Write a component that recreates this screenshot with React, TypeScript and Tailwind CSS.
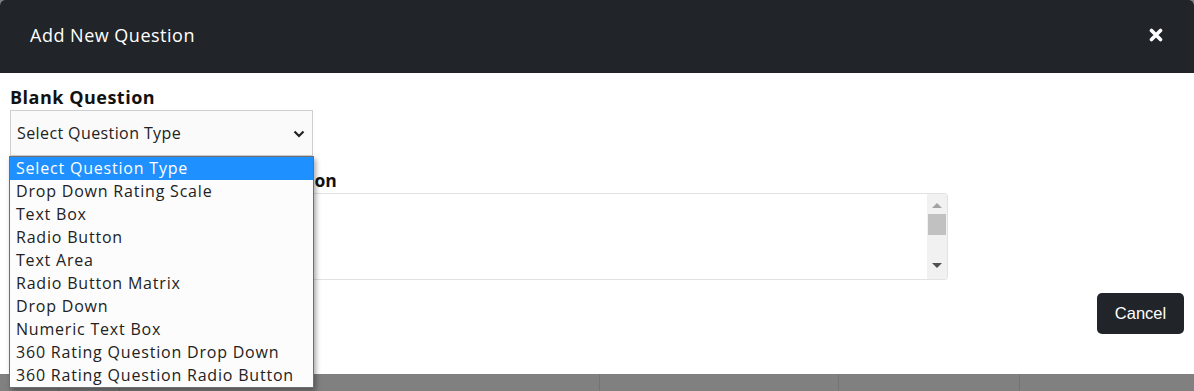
const questionTypes = [
  "Select Question Type",
  "Drop Down Rating Scale",
  "Text Box",
  "Radio Button",
  "Text Area",
  "Radio Button Matrix",
  "Drop Down",
  "Numeric Text Box",
  "360 Rating Question Drop Down",
  "360 Rating Question Radio Button",
];

const body = { fontFamily: '"Open Sans", "Noto Sans", sans-serif' };

function QuestionTypeSelect() {
  return (
    <div className="relative w-[303px]">
      <div className="flex h-[46px] items-center justify-between border border-[#cfcfcf] bg-[#fafafa] pl-[6px] pr-[7px] text-[16px] tracking-[0.4px] text-[#222]">
        <span>Select Question Type</span>
        <svg width="12" height="8" viewBox="0 0 12 8" className="mt-[1px]">
          <polyline
            points="1.5,1.5 6,6 10.5,1.5"
            fill="none"
            stroke="#222"
            strokeWidth="2.2"
          />
        </svg>
      </div>
      <ul className="absolute left-[-1px] top-[46px] z-10 w-[305px] border border-[#6f6f6f] bg-[#fcfcfc] shadow-[2px_3px_5px_rgba(0,0,0,0.35)]">
        {questionTypes.map((type, i) => (
          <li
            key={type}
            className={
              i === 0
                ? "h-[23px] bg-[#1e90ff] pl-[6px] text-[16px] leading-[23px] tracking-[0.8px] text-white"
                : "h-[23px] pl-[6px] text-[16px] leading-[23px] tracking-[0.8px] text-[#222]"
            }
          >
            {type}
          </li>
        ))}
      </ul>
    </div>
  );
}

function QuestionTextArea() {
  return (
    <div className="flex h-[87px] w-[938px] overflow-hidden rounded-[3px] border border-[#e2e2e2] bg-white">
      <div className="flex-1" />
      <div className="flex w-[20px] flex-col items-center justify-between bg-[#f1f1f1] pb-[11px] pt-[9px]">
        <div className="flex w-full flex-col items-center gap-[6px]">
          <svg width="10" height="5" viewBox="0 0 10 5">
            <polygon points="0,5 5,0 10,5" fill="#a3a3a3" />
          </svg>
          <div className="h-[21px] w-[18px] bg-[#c1c1c1]" />
        </div>
        <svg width="10" height="5" viewBox="0 0 10 5">
          <polygon points="0,0 10,0 5,5" fill="#505050" />
        </svg>
      </div>
    </div>
  );
}

export default function App() {
  return (
    <div className="flex h-[391px] w-[1194px] flex-col overflow-hidden bg-[#808080]">
      <div className="flex flex-col rounded-t-[5px] bg-white" style={body}>
        <div className="flex h-[73px] items-center justify-between rounded-t-[5px] bg-[#212529] pb-[3px] pl-[30px] pr-[31px]">
          <h2 className="text-[18px] font-medium tracking-[0.5px] text-white">
            Add New Question
          </h2>
          <svg width="14" height="14" viewBox="0 0 14 14">
            <path
              d="M2.5 2.5 L11.5 11.5 M11.5 2.5 L2.5 11.5"
              stroke="#fff"
              strokeWidth="3.6"
              strokeLinecap="round"
            />
          </svg>
        </div>
        <div className="flex h-[301px] flex-col px-[10px] pt-[12px]">
          <label className="h-[25px] text-[18px] font-bold leading-[25px] tracking-[0.5px] text-[#111]">
            Blank Question
          </label>
          <QuestionTypeSelect />
          <label className="mt-[12px] h-[25px] whitespace-nowrap text-[17.5px] font-bold leading-[25px] text-[#111]">
            Enter the Text for the Blank Question
          </label>
          <QuestionTextArea />
          <div className="mt-[13px] flex justify-end">
            <button
              className="h-[41px] w-[87px] rounded-[5px] bg-[#212529] text-[16.5px] text-white"
              style={{ fontFamily: '"Liberation Sans", Arial, sans-serif' }}
            >
              Cancel
            </button>
          </div>
        </div>
      </div>
      <div className="flex flex-1">
        <div className="w-[59px] border-r border-[#747474]" />
        <div className="w-[61px] border-r border-[#747474]" />
        <div className="w-[480px] border-r border-[#747474]" />
        <div className="w-[239px] border-r border-[#747474]" />
        <div className="w-[181px] border-r border-[#747474]" />
        <div className="flex-1" />
      </div>
    </div>
  );
}
